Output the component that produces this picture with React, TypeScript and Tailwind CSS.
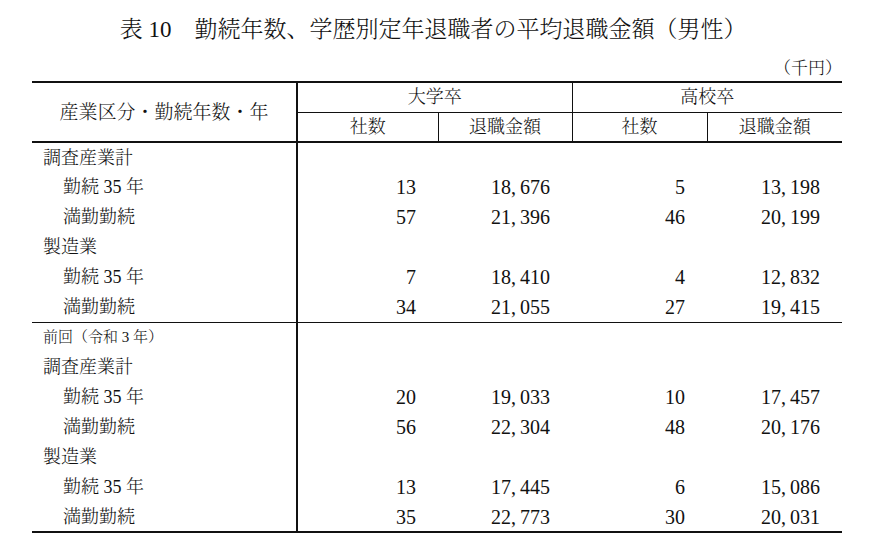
import React from "react";

type Row = {
  label: string;
  level: 0 | 1 | 2;
  values?: [string, string, string, string];
};

const current: Row[] = [
  { label: "調査産業計", level: 1 },
  { label: "勤続 35 年", level: 2, values: ["13", "18,676", "5", "13,198"] },
  { label: "満勤勤続", level: 2, values: ["57", "21,396", "46", "20,199"] },
  { label: "製造業", level: 1 },
  { label: "勤続 35 年", level: 2, values: ["7", "18,410", "4", "12,832"] },
  { label: "満勤勤続", level: 2, values: ["34", "21,055", "27", "19,415"] },
];

const previous: Row[] = [
  { label: "前回（令和 3 年）", level: 0 },
  { label: "調査産業計", level: 1 },
  { label: "勤続 35 年", level: 2, values: ["20", "19,033", "10", "17,457"] },
  { label: "満勤勤続", level: 2, values: ["56", "22,304", "48", "20,176"] },
  { label: "製造業", level: 1 },
  { label: "勤続 35 年", level: 2, values: ["13", "17,445", "6", "15,086"] },
  { label: "満勤勤続", level: 2, values: ["35", "22,773", "30", "20,031"] },
];

// comma takes a half-width cell like in the printed table
function Num({ value }: { value: string }) {
  const parts = value.split(",");
  return (
    <>
      {parts.map((p, i) => (
        <React.Fragment key={i}>
          {i > 0 && <span className="inline-block w-[0.45em] text-left">,</span>}
          {p}
        </React.Fragment>
      ))}
    </>
  );
}

function BodyRow({ row, last }: { row: Row; last?: "thin" | "thick" }) {
  const bottom =
    last === "thin"
      ? "border-b border-[#111]"
      : last === "thick"
        ? "border-b-2 border-[#111]"
        : "";
  const labelClass =
    row.level === 0
      ? "pl-[11px] text-[15px]"
      : row.level === 1
        ? "pl-[11px]"
        : "pl-[31px]";
  return (
    <tr className="h-[30px]">
      <td className={`border-r-2 border-[#111] whitespace-nowrap ${labelClass} ${bottom}`}>
        {row.label}
      </td>
      {[0, 1, 2, 3].map((i) => (
        <td key={i} className={`pr-[22px] text-right text-[20px] ${bottom}`}>
          {row.values ? <Num value={row.values[i]} /> : null}
        </td>
      ))}
    </tr>
  );
}

export default function App() {
  return (
    <div className="w-[870px] h-[541px] bg-white text-[#111] font-light font-['Liberation_Serif','Noto_Serif_CJK_JP','Noto_Sans_CJK_JP',serif]">
      <div className="h-[60px] flex items-center justify-center text-[23px] pr-[4px]">
        表 10　勤続年数、学歴別定年退職者の平均退職金額（男性）
      </div>
      <div className="ml-[32px] w-[810px]">
        <div className="h-[21px] pb-[4px] flex items-center justify-end text-[17px] leading-none">
          （千円）
        </div>
        <table className="w-[810px] table-fixed border-collapse text-[18px] leading-none">
          <colgroup>
            <col className="w-[265px]" />
            <col className="w-[141px]" />
            <col className="w-[134px]" />
            <col className="w-[135px]" />
            <col className="w-[135px]" />
          </colgroup>
          <thead>
            <tr className="h-[30px]">
              <th
                rowSpan={2}
                className="font-light text-[19px] border-t-2 border-b-2 border-r-2 border-[#111] text-center"
              >
                産業区分・勤続年数・年
              </th>
              <th
                colSpan={2}
                className="font-light border-t-2 border-b border-r-[1.5px] border-[#111] text-center"
              >
                大学卒
              </th>
              <th
                colSpan={2}
                className="font-light border-t-2 border-b border-[#111] text-center"
              >
                高校卒
              </th>
            </tr>
            <tr className="h-[30px]">
              <th className="font-light border-b-2 border-r-[1.5px] border-[#111] text-center">社数</th>
              <th className="font-light border-b-2 border-r-[1.5px] border-[#111] text-center">退職金額</th>
              <th className="font-light border-b-2 border-r-[1.5px] border-[#111] text-center">社数</th>
              <th className="font-light border-b-2 border-[#111] text-center">退職金額</th>
            </tr>
          </thead>
          <tbody>
            {current.map((row, i) => (
              <BodyRow
                key={`c${i}`}
                row={row}
                last={i === current.length - 1 ? "thin" : undefined}
              />
            ))}
            {previous.map((row, i) => (
              <BodyRow
                key={`p${i}`}
                row={row}
                last={i === previous.length - 1 ? "thick" : undefined}
              />
            ))}
          </tbody>
        </table>
      </div>
    </div>
  );
}
